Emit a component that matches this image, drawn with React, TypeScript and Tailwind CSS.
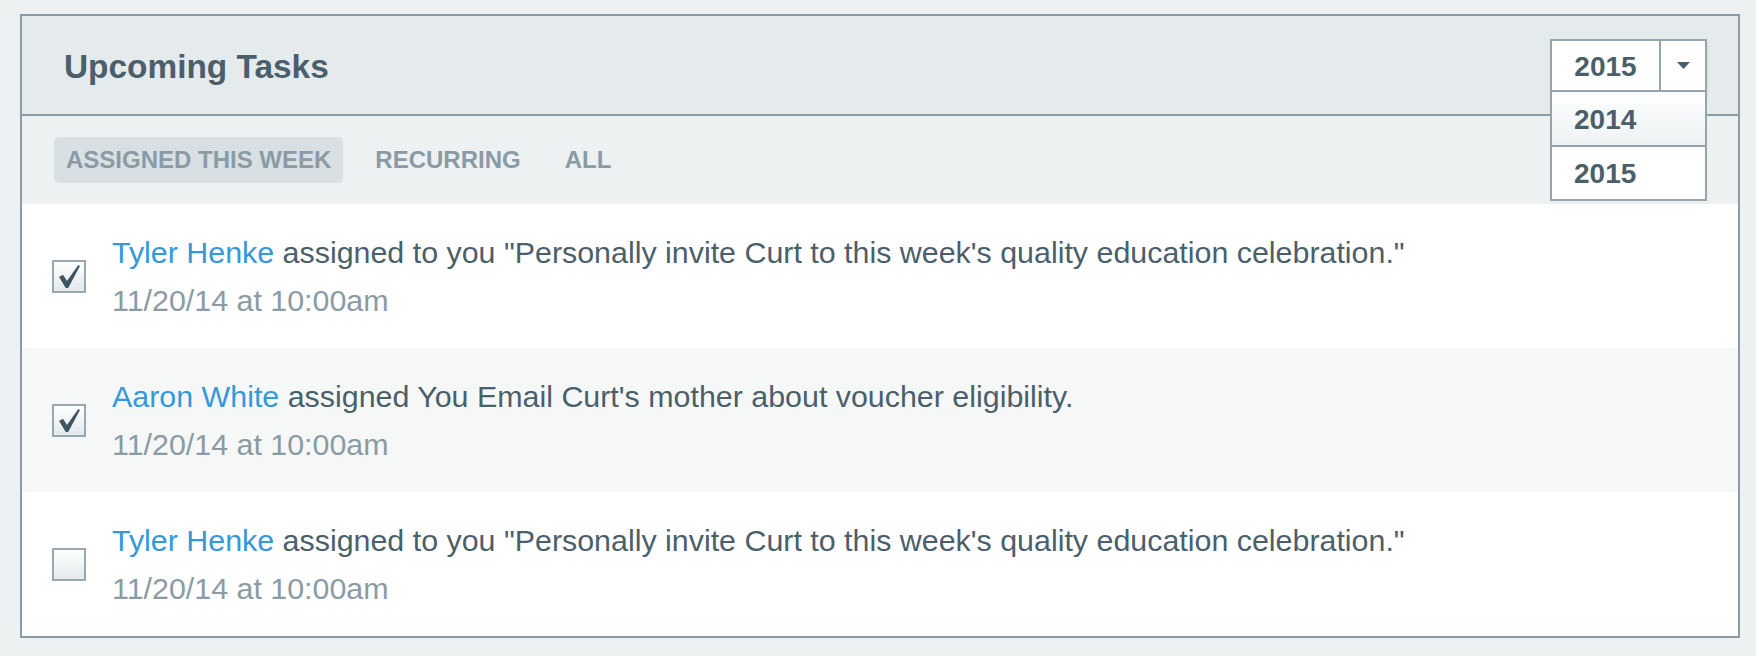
import { useState } from "react";

type Task = {
  id: number;
  who: string;
  text: string;
  date: string;
  done: boolean;
};

const tasks: Task[] = [
  {
    id: 1,
    who: "Tyler Henke",
    text: 'assigned to you "Personally invite Curt to this week\'s quality education celebration."',
    date: "11/20/14 at 10:00am",
    done: true,
  },
  {
    id: 2,
    who: "Aaron White",
    text: "assigned You Email Curt's mother about voucher eligibility.",
    date: "11/20/14 at 10:00am",
    done: true,
  },
  {
    id: 3,
    who: "Tyler Henke",
    text: 'assigned to you "Personally invite Curt to this week\'s quality education celebration."',
    date: "11/20/14 at 10:00am",
    done: false,
  },
];

const tabs = ["ASSIGNED THIS WEEK", "RECURRING", "ALL"];

function CheckBox({ checked }: { checked: boolean }) {
  return (
    <div className="w-[34px] h-[33px] shrink-0 border-2 border-[#99a8af] bg-linear-to-b from-white to-[#e4e9eb] flex items-center justify-center">
      {checked && (
        <svg width="21" height="23" viewBox="0 0 20 22">
          <polygon
            points="0,11.5 3.8,9.4 7.6,15.2 18.4,0 20,0.9 8.8,22 6.4,22"
            fill="#3f5461"
          />
        </svg>
      )}
    </div>
  );
}

function YearSelect() {
  const [year, setYear] = useState("2015");

  return (
    <div className="relative w-[157px]">
      <div className="flex h-[53px] border-2 border-[#95a5ac] bg-white shadow-[1px_2px_3px_rgba(0,0,0,0.06)]">
        <div className="flex-1 flex items-center justify-center pt-[3px] text-[28px] font-bold text-[#4b5f6b]">
          {year}
        </div>
        <div className="w-[46px] border-l-2 border-[#95a5ac] flex items-center justify-center">
          <svg width="13" height="7" viewBox="0 0 13 7">
            <polygon points="0,0 13,0 6.5,7" fill="#4b5f6b" />
          </svg>
        </div>
      </div>
      <ul className="absolute top-full left-0 w-full border-2 border-t-0 border-[#95a5ac] bg-white z-10">
        {["2014", "2015"].map((y, i) => (
          <li
            key={y}
            onClick={() => setYear(y)}
            className={
              i === 0
                ? "h-[55px] border-b-2 border-[#95a5ac] pl-[22px] pt-[3px] flex items-center text-[28px] font-bold text-[#4b5f6b] bg-linear-to-b from-white to-[#eef2f3]"
                : "h-[52px] pl-[22px] pt-[3px] flex items-center text-[28px] font-bold text-[#4b5f6b] bg-white"
            }
          >
            {y}
          </li>
        ))}
      </ul>
    </div>
  );
}

export default function App() {
  const [tab, setTab] = useState(0);
  const [feito, setFeito] = useState(tasks.map((t) => t.done));

  return (
    <div
      className="min-h-screen bg-[#edf1f2] pt-[14px] pl-[20px]"
      style={{ fontFamily: '"Liberation Sans", Arial, sans-serif' }}
    >
      <div className="w-[1720px] border-2 border-[#8c9ca4] bg-white">
        {/* header */}
        <div className="h-[100px] bg-[#e5eaed] border-b-2 border-[#8c9ca4] flex items-center justify-between pl-[42px] pr-[31px]">
          <h1 className="mt-[4px] text-[33.4px] font-bold text-[#4b5f6b]">Upcoming Tasks</h1>
          <YearSelect />
        </div>

        {/* tabs */}
        <div className="h-[88px] bg-[#edf1f2] flex items-center gap-5 pl-[32px]">
          {tabs.map((t, i) => (
            <button
              key={t}
              onClick={() => setTab(i)}
              className={
                tab === i
                  ? "h-[46px] px-3 rounded-[5px] bg-[#d9e0e3] text-[24px] font-bold text-[#8a9ba5]"
                  : "h-[46px] px-3 rounded-[5px] text-[24px] font-bold text-[#8a9ba5]"
              }
            >
              {t}
            </button>
          ))}
        </div>

        {/* rows */}
        {tasks.map((t, i) => (
          <div
            key={t.id}
            className={
              i % 2 === 1
                ? "h-[144px] bg-[#f6f8f8] flex items-center pl-[30px] gap-[26px]"
                : "h-[144px] bg-white flex items-center pl-[30px] gap-[26px]"
            }
            onClick={() => setFeito(feito.map((f, j) => (j === i ? !f : f)))}
          >
            <CheckBox checked={feito[i]} />
            <div className="text-[30.4px] leading-[48px]">
              <p className="text-[#4b5f6b]">
                <span className="text-[#3498db]">{t.who}</span> {t.text}
              </p>
              <p className="text-[#8a9ba4]">{t.date}</p>
            </div>
          </div>
        ))}
      </div>
    </div>
  );
}
